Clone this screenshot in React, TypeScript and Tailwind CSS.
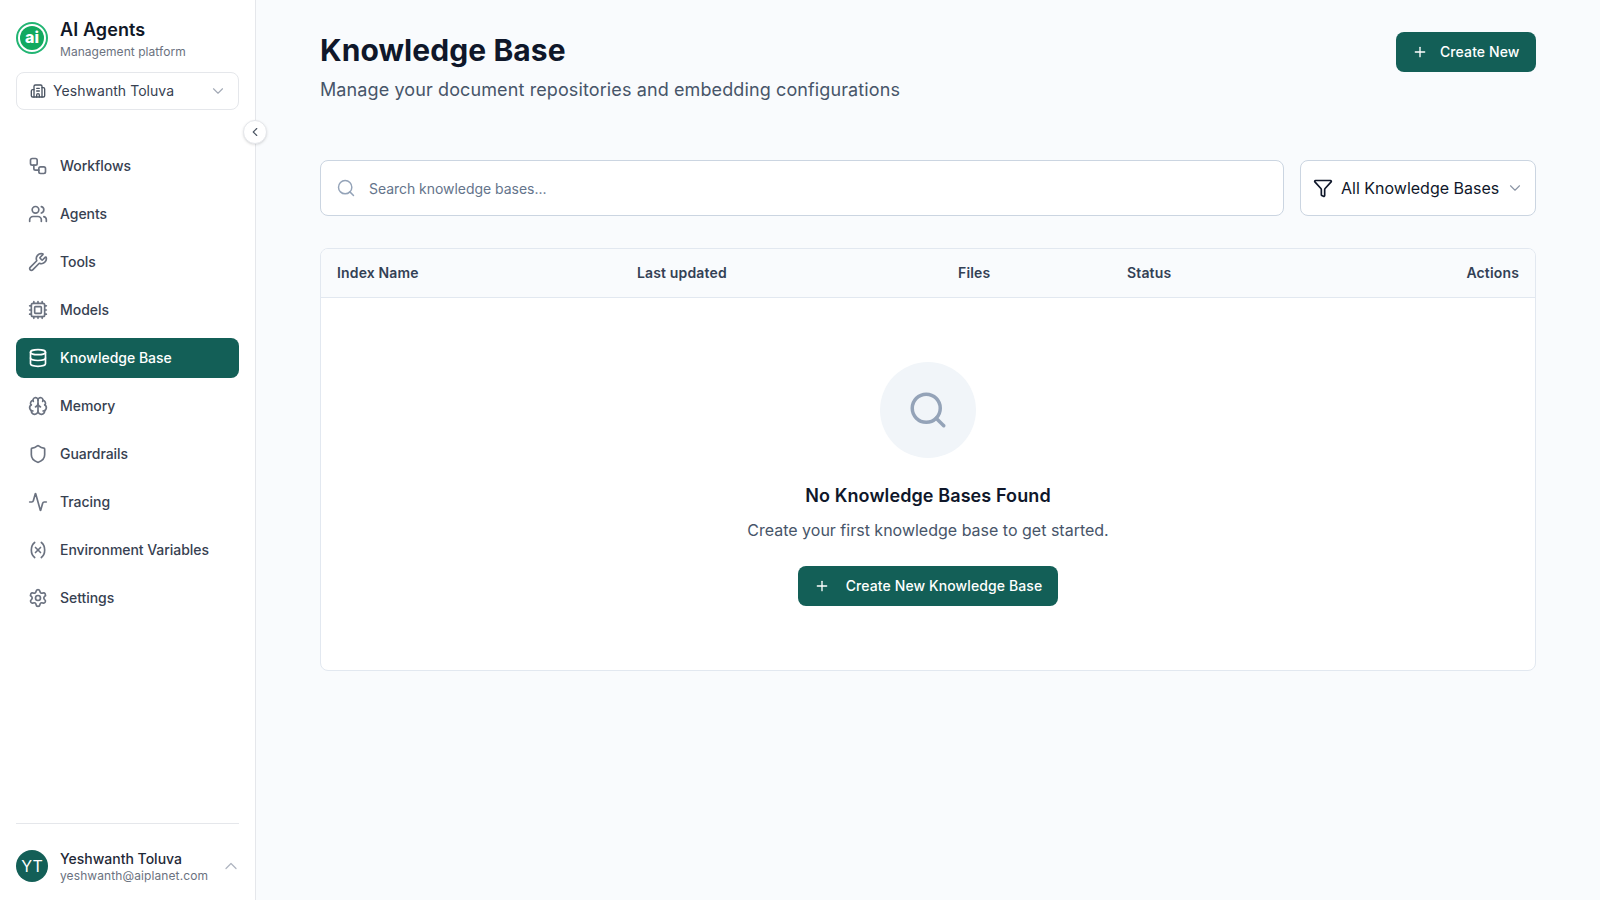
import {
  Activity,
  Brain,
  Building2,
  ChevronDown,
  ChevronLeft,
  ChevronUp,
  Cpu,
  Database,
  Filter,
  Plus,
  Search,
  Settings,
  Shield,
  Users,
  Variable,
  Workflow,
  Wrench,
} from "lucide-react";

const navItems = [
  { label: "Workflows", icon: Workflow },
  { label: "Agents", icon: Users },
  { label: "Tools", icon: Wrench },
  { label: "Models", icon: Cpu },
  { label: "Knowledge Base", icon: Database, active: true },
  { label: "Memory", icon: Brain },
  { label: "Guardrails", icon: Shield },
  { label: "Tracing", icon: Activity },
  { label: "Environment Variables", icon: Variable },
  { label: "Settings", icon: Settings },
];

function Logo() {
  return (
    <div className="flex h-8 w-8 shrink-0 items-center justify-center rounded-full border-2 border-[#22b573] bg-white">
      <div className="flex h-6 w-6 items-center justify-center rounded-full bg-[#12a95f] pb-[2px] text-base font-extrabold leading-none text-white">
        ai
      </div>
    </div>
  );
}

export default function App() {
  return (
    <div className="flex h-screen w-full bg-[#f9fbfd] font-['Inter',sans-serif]">
      {/* Sidebar */}
      <aside className="relative flex w-[256px] shrink-0 flex-col border-r border-[#e5e7eb] bg-white px-4">
        <div className="flex items-center gap-3 pt-4">
          <Logo />
          <div className="pt-[2px]">
            <div className="text-lg font-semibold leading-[24px] tracking-[0.1px] text-[#111827]">AI Agents</div>
            <div className="mt-0.5 text-xs leading-[16px] tracking-[0.05px] text-[#6b7280]">Management platform</div>
          </div>
        </div>

        <button className="mt-3 flex h-[38px] w-full items-center rounded-lg border border-[#e5e7eb] bg-white pl-[13px] pr-[11px] text-sm tracking-[0.05px] text-[#374151]">
          <Building2 className="h-4 w-4 stroke-2 text-[#4b5563]" />
          <span className="ml-[7px] flex-1 text-left">Yeshwanth Toluva</span>
          <ChevronDown className="h-[18px] w-[18px] stroke-[1.5] text-[#a3aab6]" />
        </button>

        <button className="absolute right-[-12px] top-[120px] z-10 flex h-6 w-6 items-center justify-center rounded-full border border-[#e5e7eb] bg-white shadow-sm">
          <ChevronLeft className="h-3.5 w-3.5 text-[#4b5563]" />
        </button>

        <nav className="mt-9 flex flex-col gap-2">
          {navItems.map((item) => {
            const Icon = item.icon;
            return (
              <a
                key={item.label}
                className={
                  item.active
                    ? "flex h-10 items-center gap-3 rounded-lg bg-[#135f57] px-3 text-sm font-medium text-white"
                    : "flex h-10 items-center gap-3 rounded-lg px-3 text-sm font-medium tracking-[-0.05px] text-[#374151]"
                }
              >
                <Icon className={item.active ? "h-5 w-5 stroke-2 text-white" : "h-5 w-5 stroke-2 text-[#6b7280]"} />
                {item.label}
              </a>
            );
          })}
        </nav>

        <div className="mt-auto border-t border-[#e5e7eb] pb-4 pt-6">
          <div className="flex items-center gap-3">
            <div className="flex h-8 w-8 shrink-0 items-center justify-center rounded-full bg-[#135f57] text-base text-white">
              YT
            </div>
            <div className="flex-1 pt-[2px]">
              <div className="text-sm font-medium leading-[18px] text-[#1f2937]">Yeshwanth Toluva</div>
              <div className="text-xs leading-[16px] tracking-[0.1px] text-[#6b7280]">yeshwanth@aiplanet.com</div>
            </div>
            <ChevronUp className="-mr-[2px] h-5 w-5 stroke-[1.5] text-[#b0b6c1]" />
          </div>
        </div>
      </aside>

      {/* Main */}
      <main className="min-w-0 flex-1 px-16 pt-8">
        <div className="flex items-start justify-between">
          <div>
            <h1 className="text-3xl font-bold leading-[36px] tracking-[0.08px] text-[#0f172a]">Knowledge Base</h1>
            <p className="mt-2 text-lg leading-[28px] tracking-[0.11px] text-[#475569]">
              Manage your document repositories and embedding configurations
            </p>
          </div>
          <button className="flex h-10 w-[140px] items-center gap-3 rounded-lg bg-[#135f57] px-4 text-sm font-medium tracking-[0.1px] text-white">
            <Plus className="h-4 w-4" />
            Create New
          </button>
        </div>

        <div className="mt-14 flex gap-4">
          <div className="flex h-14 flex-1 items-center rounded-lg border border-[#cbd5e1] bg-white px-4">
            <Search className="-ml-px h-5 w-5 stroke-[1.75] text-[#94a3b8]" />
            <span className="ml-[13px] pt-px text-sm tracking-[-0.04px] text-[#64748b]">Search knowledge bases...</span>
          </div>
          <button className="flex h-14 w-[236px] items-center rounded-lg border border-[#cbd5e1] bg-white pl-3 pr-[11px] text-base text-[#0f172a]">
            <Filter className="h-5 w-5 stroke-2" />
            <span className="ml-2 flex-1 text-left">All Knowledge Bases</span>
            <ChevronDown className="h-[18px] w-[18px] stroke-[1.5] text-[#8b95a5]" />
          </button>
        </div>

        <div className="mt-8 overflow-hidden rounded-lg border border-[#e2e8f0] bg-white">
          <div className="grid h-[49px] grid-cols-[300px_321px_169px_1fr_auto] items-center border-b border-[#e2e8f0] bg-[#f9fbfd] px-4 text-sm font-semibold tracking-[0.15px] text-[#334155]">
            <span>Index Name</span>
            <span>Last updated</span>
            <span>Files</span>
            <span>Status</span>
            <span>Actions</span>
          </div>
          <div className="flex flex-col items-center py-16">
            <div className="flex h-24 w-24 items-center justify-center rounded-full bg-[#f1f5f9]">
              <Search className="h-[42px] w-[42px] text-[#94a3b8]" />
            </div>
            <h3 className="mt-6 text-lg font-semibold leading-[28px] tracking-[0.1px] text-[#0f172a]">No Knowledge Bases Found</h3>
            <p className="mt-2 text-base leading-[24px] text-[#475569]">Create your first knowledge base to get started.</p>
            <button className="mt-6 flex h-10 items-center gap-4 rounded-lg bg-[#135f57] px-4 text-sm font-medium tracking-[0.1px] text-white">
              <Plus className="h-4 w-4" />
              Create New Knowledge Base
            </button>
          </div>
        </div>
      </main>
    </div>
  );
}
